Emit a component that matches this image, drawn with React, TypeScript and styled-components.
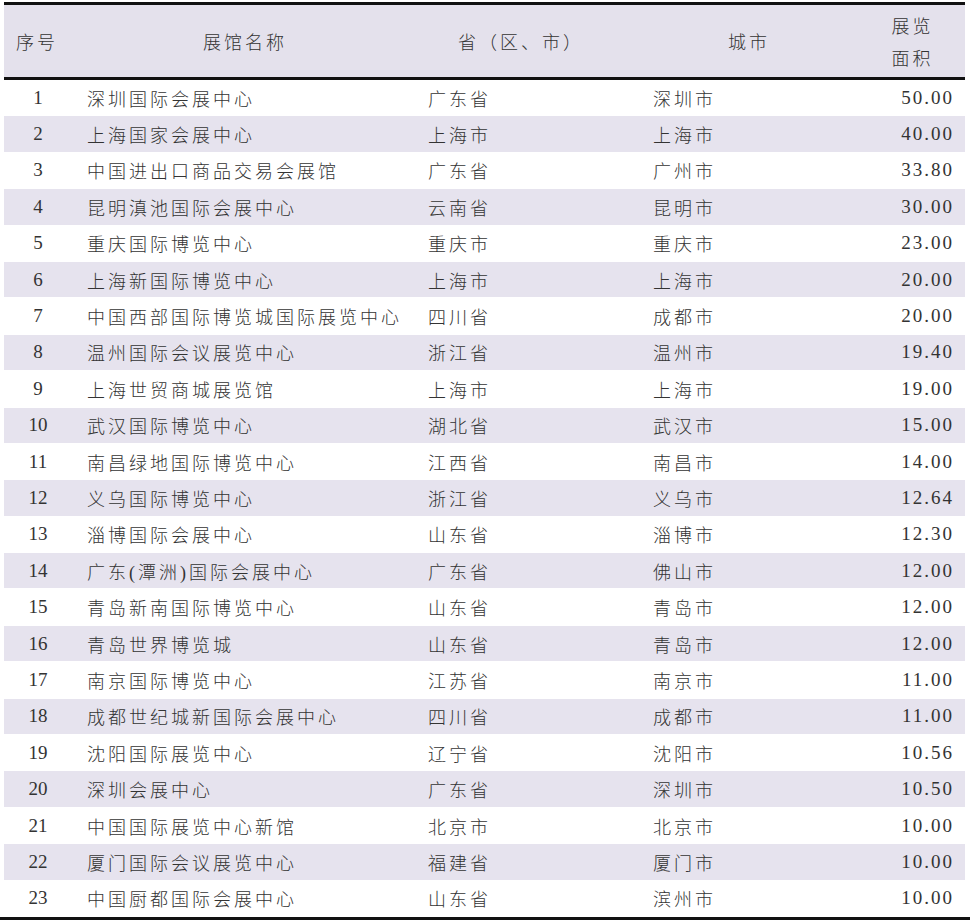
import React from "react";
import styled, { createGlobalStyle } from "styled-components";

const Global = createGlobalStyle`
  html, body { margin: 0; padding: 0; background: #ffffff; }
  body {
    font-family: "Liberation Serif", "Noto Sans CJK SC", serif;
    color: #333333;
  }
`;

const Page = styled.div`
  width: 970px;
  padding-top: 2px;
`;

const Table = styled.div`
  margin-left: 4px;
  width: 961px;
  border-top: 3px solid #111;
`;

const cols = "66px 350px 202px 238px 105px";

const HeaderRow = styled.div`
  display: grid;
  grid-template-columns: ${cols};
  height: 72px;
  background: #e4e1ec;
  border-bottom: 3px solid #111;
  align-items: center;
`;

const HeadCell = styled.div<{ $offset?: number }>`
  font-family: "Noto Sans CJK SC", sans-serif;
  font-weight: 300;
  font-size: 18px;
  letter-spacing: 3px;
  text-align: center;
  line-height: 32px;
  padding-left: ${(p) => p.$offset ?? 0}px;
  color: #333;
`;

const Row = styled.div<{ $shade: boolean }>`
  display: grid;
  grid-template-columns: ${cols};
  height: 36.4px;
  box-sizing: border-box;
  align-items: center;
  background: ${(p) => (p.$shade ? "#e6e3ee" : "#ffffff")};
  border-bottom: 1px solid #fff;
  background-clip: padding-box;
`;

const IndexCell = styled.div`
  font-family: "Liberation Serif", serif;
  font-size: 19px;
  text-align: center;
  padding-left: 2px;
  color: #333;
`;

const TextCell = styled.div<{ $pad: number }>`
  font-family: "Liberation Serif", "Noto Sans CJK SC", serif;
  font-weight: 300;
  font-size: 18px;
  letter-spacing: 3px;
  padding-left: ${(p) => p.$pad}px;
  white-space: nowrap;
  color: #333;
`;

const NumCell = styled.div`
  font-family: "Liberation Serif", serif;
  font-size: 19px;
  letter-spacing: 2px;
  text-align: right;
  padding-right: 11px;
  color: #333;
`;

const BottomRule = styled.div`
  width: 970px;
  height: 3px;
  background: #111;
`;

type Item = [string, string, string, string];

const data: Item[] = [
  ["深圳国际会展中心", "广东省", "深圳市", "50.00"],
  ["上海国家会展中心", "上海市", "上海市", "40.00"],
  ["中国进出口商品交易会展馆", "广东省", "广州市", "33.80"],
  ["昆明滇池国际会展中心", "云南省", "昆明市", "30.00"],
  ["重庆国际博览中心", "重庆市", "重庆市", "23.00"],
  ["上海新国际博览中心", "上海市", "上海市", "20.00"],
  ["中国西部国际博览城国际展览中心", "四川省", "成都市", "20.00"],
  ["温州国际会议展览中心", "浙江省", "温州市", "19.40"],
  ["上海世贸商城展览馆", "上海市", "上海市", "19.00"],
  ["武汉国际博览中心", "湖北省", "武汉市", "15.00"],
  ["南昌绿地国际博览中心", "江西省", "南昌市", "14.00"],
  ["义乌国际博览中心", "浙江省", "义乌市", "12.64"],
  ["淄博国际会展中心", "山东省", "淄博市", "12.30"],
  ["广东(潭洲)国际会展中心", "广东省", "佛山市", "12.00"],
  ["青岛新南国际博览中心", "山东省", "青岛市", "12.00"],
  ["青岛世界博览城", "山东省", "青岛市", "12.00"],
  ["南京国际博览中心", "江苏省", "南京市", "11.00"],
  ["成都世纪城新国际会展中心", "四川省", "成都市", "11.00"],
  ["沈阳国际展览中心", "辽宁省", "沈阳市", "10.56"],
  ["深圳会展中心", "广东省", "深圳市", "10.50"],
  ["中国国际展览中心新馆", "北京市", "北京市", "10.00"],
  ["厦门国际会议展览中心", "福建省", "厦门市", "10.00"],
  ["中国厨都国际会展中心", "山东省", "滨州市", "10.00"],
];

export default function App() {
  return (
    <Page>
      <Global />
      <Table>
        <HeaderRow>
          <HeadCell>序号</HeadCell>
          <HeadCell>展馆名称</HeadCell>
          <HeadCell>省（区、市）</HeadCell>
          <HeadCell $offset={16}>城市</HeadCell>
          <HeadCell>
            展览
            <br />
            面积
          </HeadCell>
        </HeaderRow>
        {data.map((d, i) => (
          <Row key={i} $shade={i % 2 === 1}>
            <IndexCell>{i + 1}</IndexCell>
            <TextCell $pad={17}>{d[0]}</TextCell>
            <TextCell $pad={8}>{d[1]}</TextCell>
            <TextCell $pad={31}>{d[2]}</TextCell>
            <NumCell>{d[3]}</NumCell>
          </Row>
        ))}
      </Table>
      <BottomRule />
    </Page>
  );
}
